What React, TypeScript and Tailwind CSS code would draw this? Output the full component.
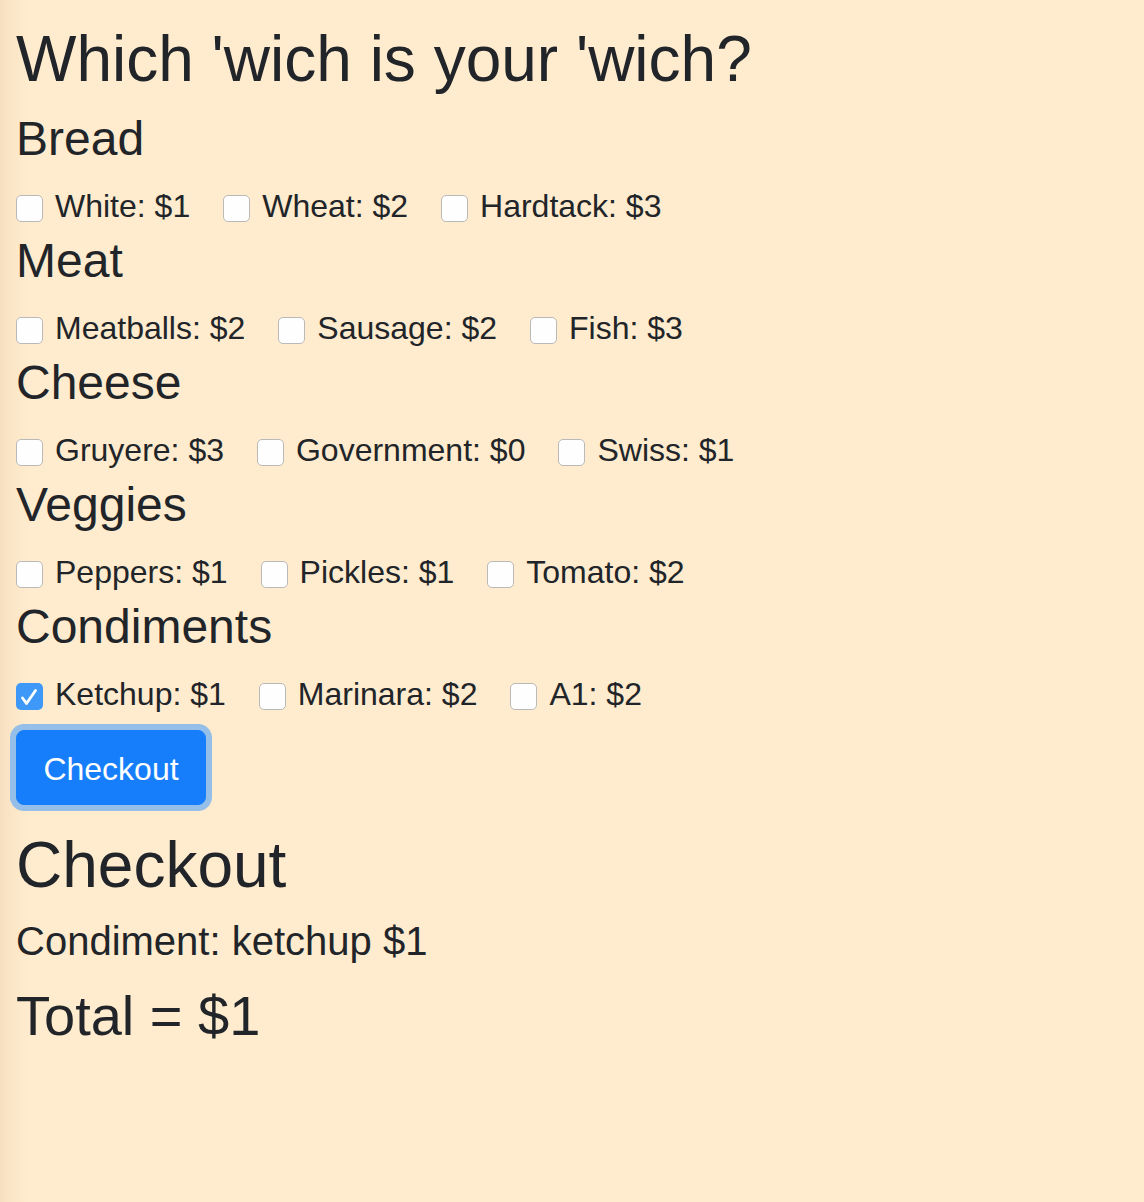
import React, { useState } from "react";

type Option = { name: string; price: number };
type Category = { title: string; singular: string; key: string; options: Option[] };

const CATEGORIES: Category[] = [
  {
    title: "Bread",
    singular: "Bread",
    key: "bread",
    options: [
      { name: "White", price: 1 },
      { name: "Wheat", price: 2 },
      { name: "Hardtack", price: 3 },
    ],
  },
  {
    title: "Meat",
    singular: "Meat",
    key: "meat",
    options: [
      { name: "Meatballs", price: 2 },
      { name: "Sausage", price: 2 },
      { name: "Fish", price: 3 },
    ],
  },
  {
    title: "Cheese",
    singular: "Cheese",
    key: "cheese",
    options: [
      { name: "Gruyere", price: 3 },
      { name: "Government", price: 0 },
      { name: "Swiss", price: 1 },
    ],
  },
  {
    title: "Veggies",
    singular: "Veggie",
    key: "veggies",
    options: [
      { name: "Peppers", price: 1 },
      { name: "Pickles", price: 1 },
      { name: "Tomato", price: 2 },
    ],
  },
  {
    title: "Condiments",
    singular: "Condiment",
    key: "condiments",
    options: [
      { name: "Ketchup", price: 1 },
      { name: "Marinara", price: 2 },
      { name: "A1", price: 2 },
    ],
  },
];

function CheckBox({ checked }: { checked: boolean }) {
  return checked ? (
    <span className="mt-[4px] mr-[12px] flex h-[27px] w-[27px] shrink-0 items-center justify-center rounded-[5px] bg-[#3d98f7]">
      <svg width="27" height="27" viewBox="0 0 27 27">
        <path
          d="M6.5 15 L10.5 20.5 L19.5 7.5"
          fill="none"
          stroke="#ffffff"
          strokeWidth="2.8"
          strokeLinecap="round"
          strokeLinejoin="round"
        />
      </svg>
    </span>
  ) : (
    <span className="mt-[4px] mr-[12px] block h-[27px] w-[27px] shrink-0 rounded-[5px] border border-[#b9b9b9] bg-[#fefefe]" />
  );
}

export default function App() {
  const [selected, setSelected] = useState<Record<string, boolean>>({
    "condiments:Ketchup": true,
  });

  const toggle = (id: string) =>
    setSelected((s) => ({ ...s, [id]: !s[id] }));

  const chosen: { label: string; name: string; price: number }[] = [];
  CATEGORIES.forEach((c) =>
    c.options.forEach((o) => {
      if (selected[`${c.key}:${o.name}`]) {
        chosen.push({ label: c.singular, name: o.name.toLowerCase(), price: o.price });
      }
    })
  );
  const total = chosen.reduce((a, b) => a + b.price, 0);

  return (
    <div
      className="min-h-screen bg-[#ffebcd] bg-[linear-gradient(to_right,#f6dfbf_0px,#fbe6c8_12px,#ffebcd_30px)] pl-[16px] pt-[21px] text-[#212529]"
      style={{ fontFamily: '"Liberation Sans", Arial, Helvetica, sans-serif' }}
    >
      <h1 className="mb-[12px] text-[64px] leading-[77px] font-normal">
        Which 'wich is your 'wich?
      </h1>

      {CATEGORIES.map((c) => (
        <div key={c.key} className="mb-[2px]">
          <h2 className="mb-[14px] text-[48px] leading-[58px] font-normal">{c.title}</h2>
          <div className="flex h-[48px] items-center">
            {c.options.map((o) => {
              const id = `${c.key}:${o.name}`;
              return (
                <label
                  key={id}
                  className="mr-[33px] flex cursor-pointer items-center text-[32px] leading-[48px]"
                  onClick={(e) => {
                    e.preventDefault();
                    toggle(id);
                  }}
                >
                  <CheckBox checked={!!selected[id]} />
                  <span>
                    {o.name}: ${o.price}
                  </span>
                </label>
              );
            })}
          </div>
        </div>
      ))}

      <button
        type="button"
        className="mt-[12px] flex h-[75px] w-[190px] items-center justify-center rounded-[8px] border border-[#167efb] bg-[#167efb] pt-[3px] text-[32px] leading-[48px] text-white shadow-[0_0_0_6px_#95bee8]"
      >
        Checkout
      </button>

      <div className="mt-[22px]">
        <h2 className="mb-[13px] text-[64px] leading-[77px] font-normal">Checkout</h2>
        {chosen.map((c) => (
          <h5 key={c.label + c.name} className="text-[40px] leading-[48px] font-normal">
            {c.label}: {c.name} ${c.price}
          </h5>
        ))}
        <h3 className="mt-[19px] text-[56px] leading-[64px] font-normal">Total = ${total}</h3>
      </div>
    </div>
  );
}
